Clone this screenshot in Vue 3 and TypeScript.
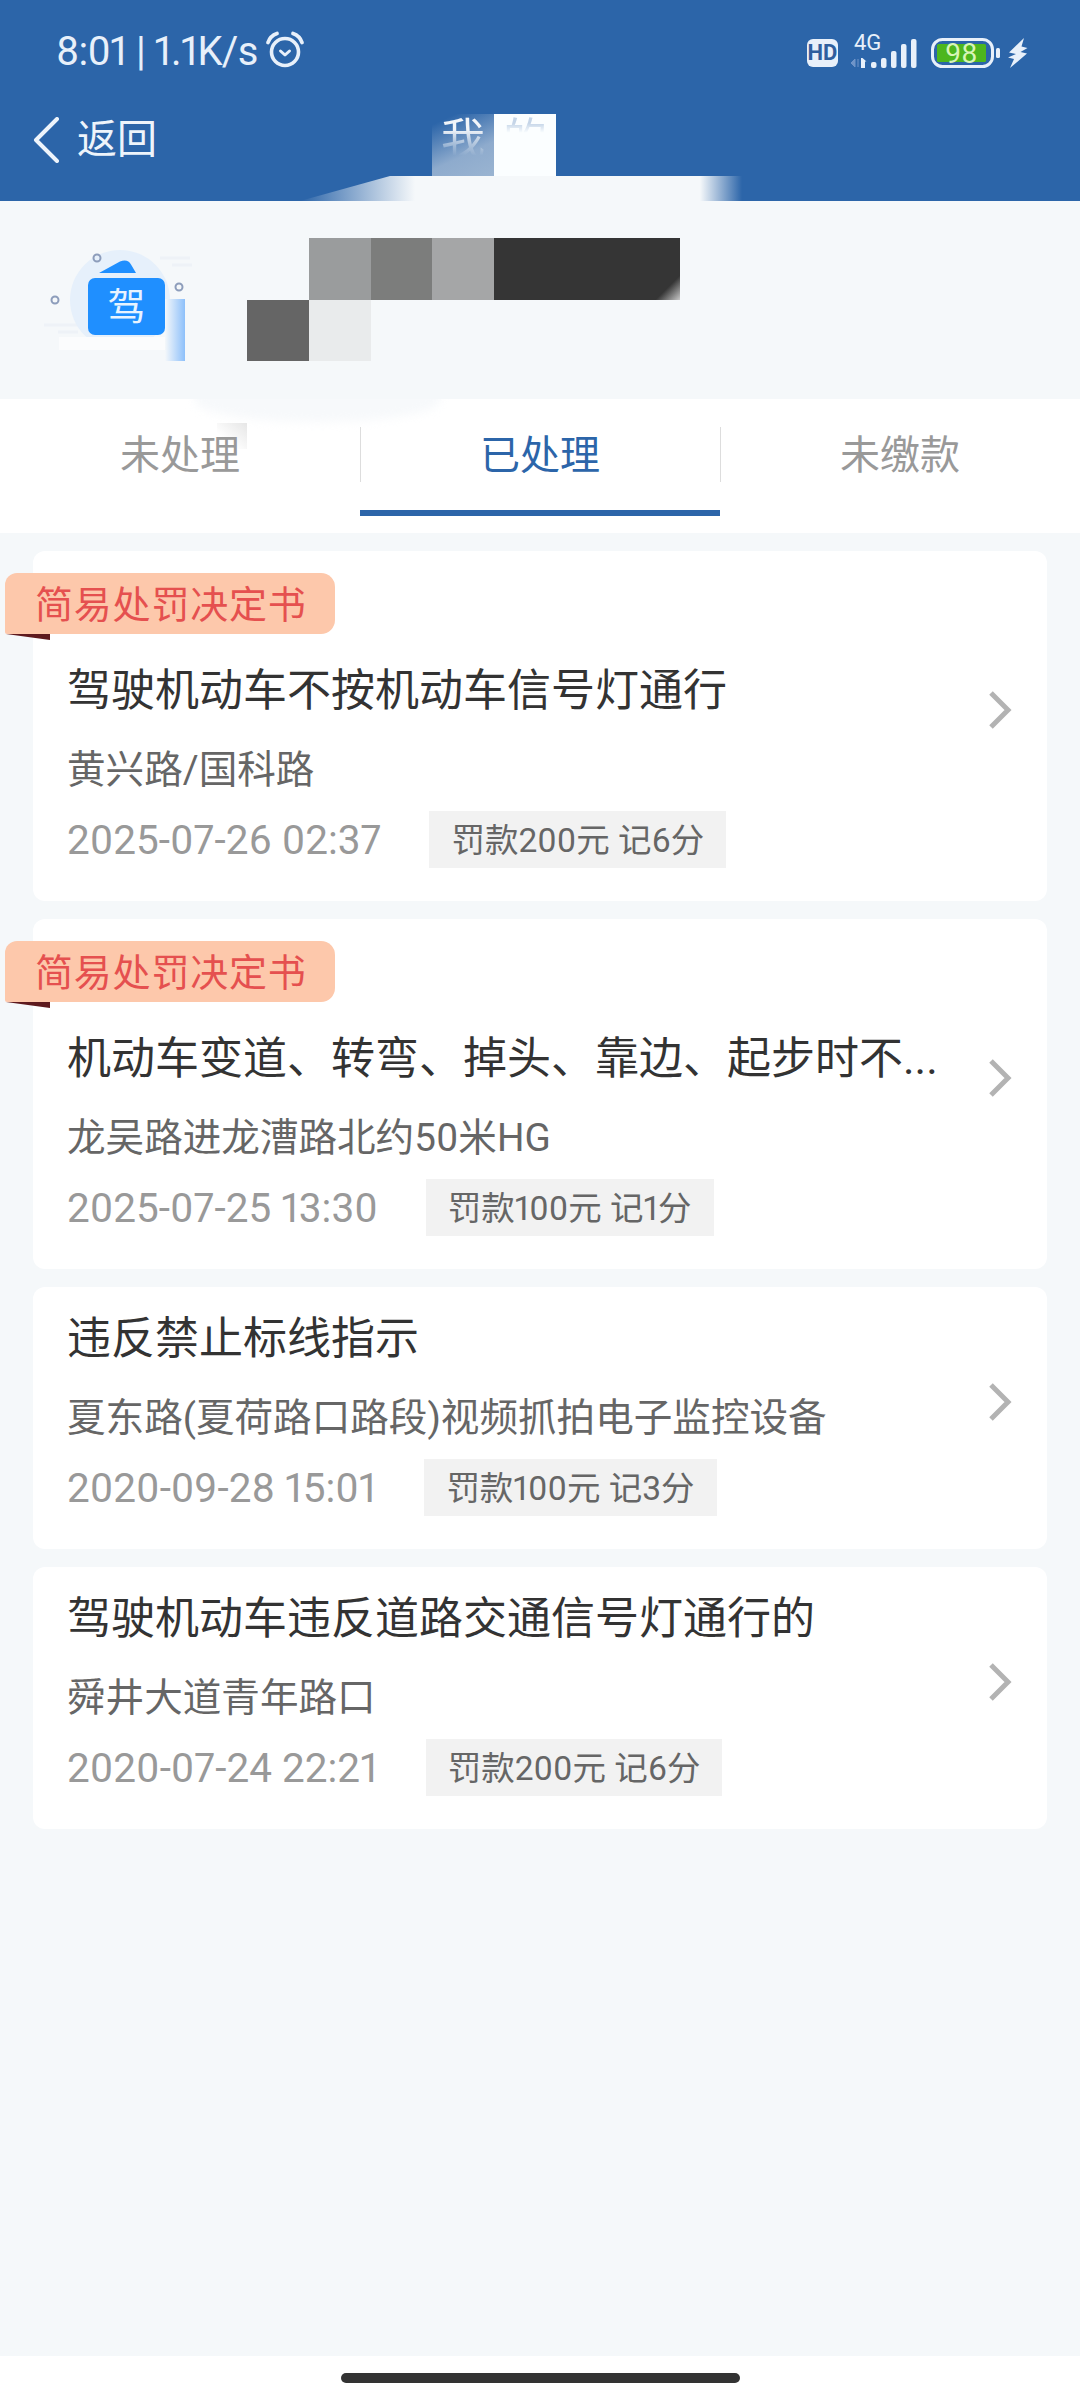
<template>
  <div class="page">
    <header class="header">
      <div class="status-bar">
        <div class="status-left">
          <span class="time">8:01 | 1.1K/s</span>
          <svg class="alarm" width="44" height="44" viewBox="0 0 44 44" fill="none" stroke="#e8f0fa">
            <circle cx="22" cy="24" r="13.5" stroke-width="3.6" />
            <path d="M17.5 23l4.5 4 4.5-4" stroke-width="3" stroke-linecap="round" stroke-linejoin="round" />
            <path d="M5 14.5c1.500-4.500 4.500-7.500 9-9M39 14.500c-1.500-4.500-4.500-7.500-9-9" stroke-width="3.800" stroke-linecap="round" />
          </svg>
        </div>
        <svg class="status-icons" width="240" height="54" viewBox="800 24 240 54">
          <rect x="807" y="38" width="31" height="28" rx="6" fill="#e8f0fa" />
          <text x="822.500" y="59" class="hd-text" text-anchor="middle">HD</text>
          <text x="854" y="48.500" class="net-text">4G</text>
          <path d="M855 58v8l-4-4zM858 66v-8" fill="#6f94c8" stroke="#6f94c8" stroke-width="1" />
          <path d="M861 57h1.500l4 3.500h-1.500v6.500h-4z" fill="#e8f0fa" />
          <rect v-for="bar in signalBars" :key="bar.x" :x="bar.x" :y="bar.y" width="5.500" :height="67 - bar.y" rx="2" fill="#e8f0fa" />
          <rect x="932.500" y="38.500" width="60" height="27" rx="10" fill="none" stroke="#e8f0fa" stroke-width="3" />
          <rect x="937" y="43" width="49" height="18" rx="1.500" fill="#4db61e" />
          <text x="961.500" y="62" class="battery-text" text-anchor="middle">98</text>
          <rect x="996" y="47" width="4" height="10" rx="1.500" fill="#e8f0fa" />
          <path d="M1024 37l-15 14.500 7 1.500-8 3.500 6 1.500-4 9 17-14.500-6.500-1.500 7-4-6-1.500z" fill="#e8f0fa" />
        </svg>
      </div>
      <div class="nav-bar">
        <svg class="back" width="27" height="46" viewBox="0 0 27 46" fill="none" stroke="#eef4fb" stroke-width="4" stroke-linecap="round" stroke-linejoin="round">
          <path d="M24 2L3 23l21 21" />
        </svg>
        <span class="back-text">返回</span>
      </div>
      <div class="title-patch patch-dim"><span>我</span></div>
      <div class="title-patch patch-white"><span>的</span></div>
      <div class="header-smear"></div>
    </header>

    <section class="profile">
      <svg class="logo" width="170" height="135" viewBox="24 235 170 135">
        <defs>
          <linearGradient id="barFade" x1="0" y1="0" x2="1" y2="0">
            <stop offset="0" stop-color="#f5f8fa" />
            <stop offset="1" stop-color="#8dc0fa" />
          </linearGradient>
        </defs>
        <path d="M160 258h30M172 265h20M44 325h34M58 332h20" stroke="#eef2f7" stroke-width="3" fill="none" />
        <circle cx="120" cy="300" r="50" fill="#e6f0fb" />
        <rect x="59" y="337" width="112" height="13" fill="#fbfcfd" />
        <rect x="165" y="299" width="20" height="62" fill="url(#barFade)" />
        <path d="M99 273l21-11.500c5-2 9-1 11 3l5 8.500z" fill="#1f8fff" />
        <rect x="88" y="278" width="77" height="57" rx="7" fill="#1f8fff" />
        <text x="126.500" y="320" class="logo-text" text-anchor="middle">驾</text>
        <g fill="none" stroke="#8d9dbb" stroke-width="2">
          <circle cx="97" cy="258" r="3.500" />
          <circle cx="179" cy="287" r="3.500" />
          <circle cx="55" cy="300" r="3.500" />
        </g>
      </svg>
      <div class="mosaic">
        <i class="empty"></i>
        <i class="m1"></i>
        <i class="m2"></i>
        <i class="m3"></i>
        <i class="wide"></i>
        <i class="m4"></i>
        <i class="m5"></i>
      </div>
    </section>

    <nav class="tabs">
      <div class="tab-smear"></div>
      <div class="tab-stain"></div>
      <div v-for="(tab, i) in tabs" :key="tab" class="tab" :class="{ active: i === activeTab }">
        <span>{{ tab }}</span>
      </div>
    </nav>

    <main class="list">
      <article v-for="item in records" :key="item.date" class="card" :class="{ 'has-ribbon': item.ribbon }">
        <div v-if="item.ribbon" class="ribbon">简易处罚决定书</div>
        <div class="card-body">
          <div class="card-title">{{ item.title }}</div>
          <div class="card-place">{{ item.place }}</div>
          <div class="card-meta">
            <span class="card-date">{{ item.date }}</span>
            <span class="card-chip">{{ item.fine }}</span>
          </div>
        </div>
        <svg class="chevron" width="24" height="40" viewBox="0 0 24 40" fill="none" stroke="#b3b3b3" stroke-width="5">
          <path d="M3 3l17 17L3 37" />
        </svg>
      </article>
    </main>

    <div class="home-bar"><span></span></div>
  </div>
</template>

<script setup lang="ts">
interface TrafficRecord {
  title: string;
  place: string;
  date: string;
  fine: string;
  ribbon: boolean;
}

const tabs = ['未处理', '已处理', '未缴款'];
const activeTab = 1;

const signalBars = [
  { x: 871, y: 61 },
  { x: 881, y: 57 },
  { x: 891, y: 50 },
  { x: 901, y: 43 },
  { x: 911, y: 38 },
];

const records: TrafficRecord[] = [
  {
    title: '驾驶机动车不按机动车信号灯通行',
    place: '黄兴路/国科路',
    date: '2025-07-26 02:37',
    fine: '罚款200元 记6分',
    ribbon: true,
  },
  {
    title: '机动车变道、转弯、掉头、靠边、起步时不...',
    place: '龙吴路进龙漕路北约50米HG',
    date: '2025-07-25 13:30',
    fine: '罚款100元 记1分',
    ribbon: true,
  },
  {
    title: '违反禁止标线指示',
    place: '夏东路(夏荷路口路段)视频抓拍电子监控设备',
    date: '2020-09-28 15:01',
    fine: '罚款100元 记3分',
    ribbon: false,
  },
  {
    title: '驾驶机动车违反道路交通信号灯通行的',
    place: '舜井大道青年路口',
    date: '2020-07-24 22:21',
    fine: '罚款200元 记6分',
    ribbon: false,
  },
];
</script>

<style>
body {
  margin: 0;
  background: #f5f8fa;
}
</style>

<style scoped>
.page {
  width: 1080px;
  height: 2400px;
  display: flex;
  flex-direction: column;
  background: #f5f8fa;
  font-family: Roboto, "Noto Sans CJK SC", sans-serif;
  font-variant-numeric: proportional-nums;
  overflow: hidden;
}

/* Header */
.header {
  position: relative;
  height: 201px;
  background: #2c65a9;
  flex-shrink: 0;
}

.status-bar {
  height: 104px;
  display: flex;
  justify-content: space-between;
  align-items: center;
  padding: 0 40px 0 56px;
}

.status-left {
  display: flex;
  align-items: center;
}

.time {
  font-size: 40px;
  line-height: 48px;
  letter-spacing: -0.7px;
  color: #e8f0fa;
}

.alarm {
  margin: -4px 0 0 5px;
}

.hd-text {
  font-size: 22px;
  font-weight: 700;
  fill: #2f5f9e;
}

.net-text {
  font-size: 22px;
  fill: #e8f0fa;
}

.battery-text {
  font-size: 28px;
  fill: #d8f5b8;
}

.nav-bar {
  display: flex;
  align-items: center;
  height: 72px;
  padding-left: 33px;
}

.back-text {
  margin-left: 17px;
  font-size: 40px;
  line-height: 74px;
  color: #eef4fb;
}

.title-patch {
  position: absolute;
  top: 114px;
  width: 62px;
  height: 62px;
  overflow: hidden;
  text-align: center;
  font-size: 44px;
  line-height: 52px;
}

.title-patch span {
  display: block;
  -webkit-mask-image: linear-gradient(to bottom, #000 30%, transparent 80%);
  mask-image: linear-gradient(to bottom, #000 30%, transparent 80%);
}

.patch-dim {
  left: 432px;
  background: linear-gradient(155deg, #2c65a9 12%, #8eabcd 62%, #9ab4d1);
  color: #f2f5f9;
}

.patch-white {
  left: 494px;
  background: #fbfeff;
  color: #c5d5e8;
}

.patch-white span {
  -webkit-mask-image: linear-gradient(to bottom, #000 18%, transparent 36%);
  mask-image: linear-gradient(to bottom, #000 18%, transparent 36%);
}

.header-smear {
  position: absolute;
  left: 300px;
  top: 176px;
  width: 445px;
  height: 25px;
  background: linear-gradient(to right, transparent 0, #f5f8fa 115px, #f5f8fa 400px, transparent 442px);
  clip-path: polygon(90px 0, 100% 0, 100% 100%, 0 100%);
}

/* Profile */
.profile {
  height: 198px;
  flex-shrink: 0;
  box-sizing: border-box;
  padding: 34px 0 0 24px;
  display: flex;
  align-items: flex-start;
}

.logo-text {
  font-size: 38px;
  fill: #e8f3ff;
}

.mosaic {
  margin: 3px 0 0 53px;
  display: grid;
  grid-template-columns: 62px 62px 61px 62px 186px;
  grid-auto-rows: 61.500px;
}

.m1 {
  background: #9a9c9d;
}

.m2 {
  background: #7c7d7c;
}

.m3 {
  background: #a5a6a7;
}

.m4 {
  background: #656565;
}

.m5 {
  background: #e9ebec;
}

.mosaic .wide {
  background: linear-gradient(135deg, #353535 90%, #c9c9c9 100%);
}

/* Tabs */
.tabs {
  position: relative;
  height: 134px;
  flex-shrink: 0;
  display: flex;
  background: #fff;
  overflow: hidden;
}

.tab-smear {
  position: absolute;
  left: 195px;
  top: -19px;
  width: 245px;
  height: 42px;
  border-radius: 0 0 50% 50%;
  background: #f7f9fb;
  filter: blur(5px);
}

.tab-stain {
  position: absolute;
  left: 217px;
  top: 24px;
  width: 30px;
  height: 26px;
  background: linear-gradient(to bottom left, #e6e6e6, rgba(255, 255, 255, 0) 70%);
}

.tab {
  position: relative;
  flex: 1;
  text-align: center;
  font-size: 40px;
  line-height: 114px;
  color: #999;
}

.tab span {
  position: relative;
}

.tab + .tab::before {
  content: "";
  position: absolute;
  left: 0;
  top: 28px;
  height: 55px;
  width: 1px;
  background: #ddd;
}

.tab.active {
  color: #2c65a9;
}

.tab.active::after {
  content: "";
  position: absolute;
  left: 0;
  right: 0;
  top: 111px;
  height: 6px;
  background: #2c65a9;
}

/* List */
.list {
  flex: 1;
  padding: 18px 33px;
  display: flex;
  flex-direction: column;
  gap: 18px;
}

.card {
  position: relative;
  display: flex;
  padding: 0 35px 0 34px;
  background: #fff;
  border-radius: 12px;
}

.ribbon {
  position: absolute;
  left: -28px;
  top: 22px;
  height: 61px;
  width: 330px;
  box-sizing: border-box;
  padding: 3px 0 0 30px;
  border-radius: 12px 14px 14px 2px;
  background: #fdc8ab;
  color: #e5504f;
  font-size: 38px;
  line-height: 58px;
  letter-spacing: 0.8px;
  white-space: nowrap;
}

.ribbon::after {
  content: "";
  position: absolute;
  left: 1px;
  top: 61px;
  width: 44px;
  height: 6px;
  background: #5e1a1e;
  clip-path: polygon(0 0, 100% 0, 100% 100%);
}

.card-body {
  width: 885px;
  padding: 20px 0 33px;
}

.has-ribbon .card-body {
  padding-top: 108px;
}

.card-title {
  font-size: 44px;
  line-height: 64px;
  height: 62px;
  color: #333;
  white-space: nowrap;
}

.card-place {
  margin-top: 20px;
  font-size: 38.600px;
  line-height: 58px;
  height: 54px;
  color: #666;
  white-space: nowrap;
}

.card-meta {
  margin-top: 16px;
  height: 57px;
  display: flex;
  align-items: flex-start;
  gap: 48px;
}

.card-date {
  font-size: 40.500px;
  line-height: 59px;
  color: #999;
}

.card-chip {
  height: 57px;
  padding: 0 22px;
  background: #f2f2f2;
  color: #666;
  font-size: 33.500px;
  line-height: 59px;
}

.chevron {
  align-self: center;
  margin: 0 0 32px 36px;
  flex-shrink: 0;
}

/* Home indicator */
.home-bar {
  height: 44px;
  flex-shrink: 0;
  background: #fff;
  display: flex;
  justify-content: center;
  padding-top: 17px;
  box-sizing: border-box;
}

.home-bar span {
  width: 399px;
  height: 10px;
  border-radius: 5px;
  background: #333;
}
</style>
